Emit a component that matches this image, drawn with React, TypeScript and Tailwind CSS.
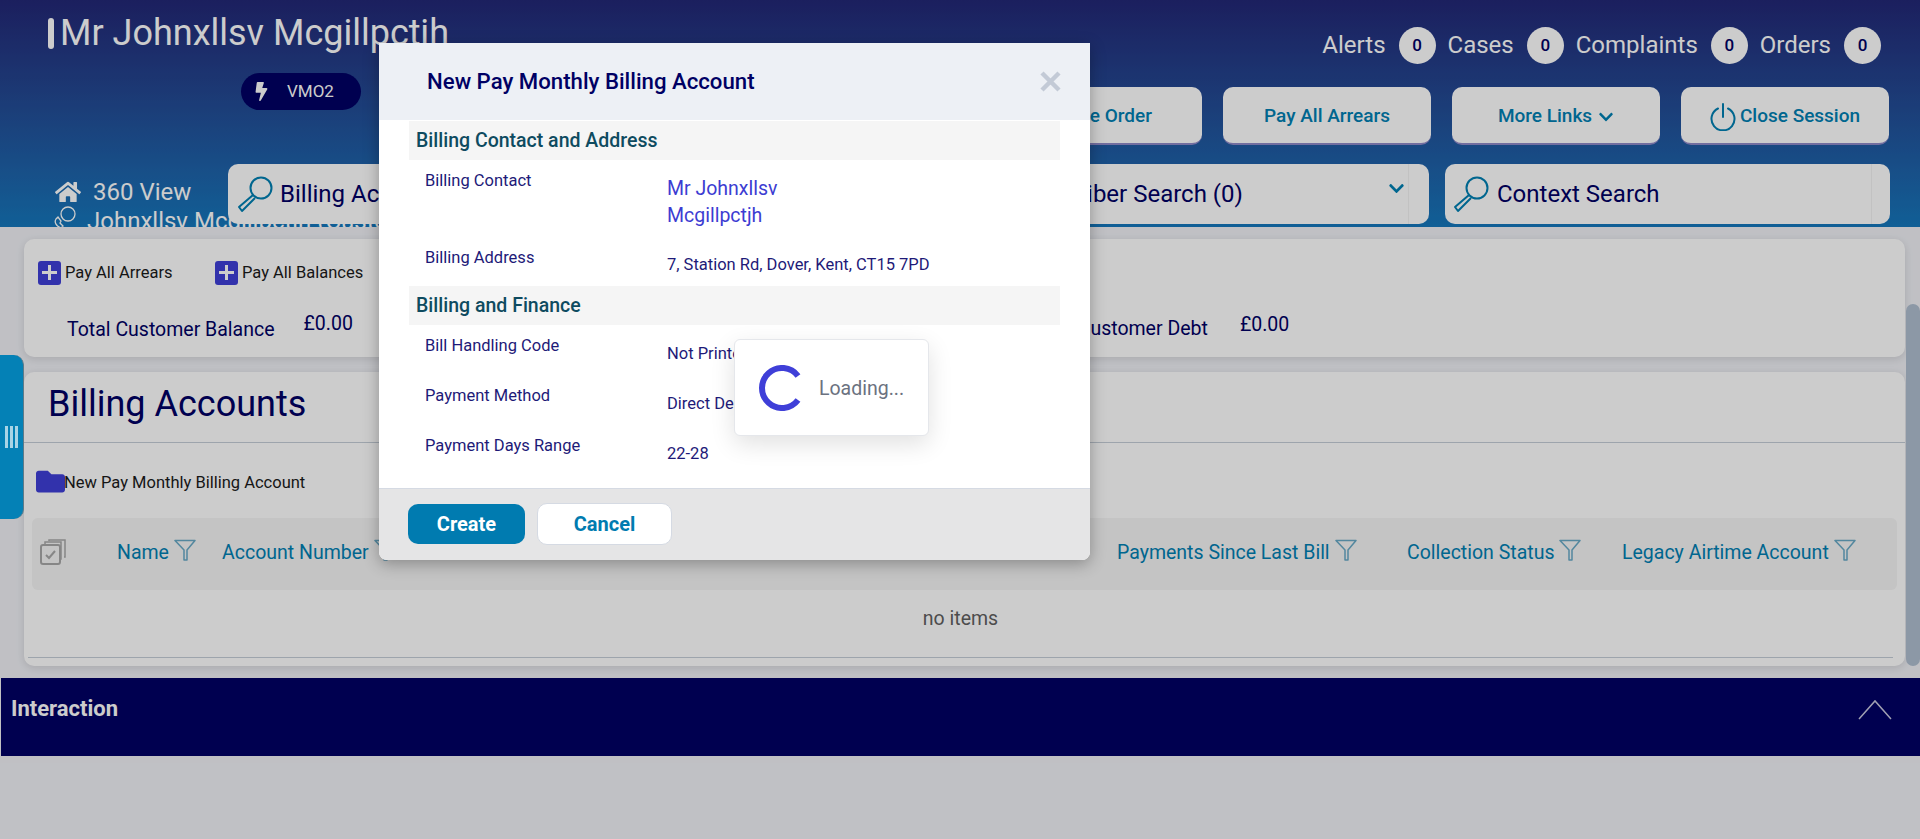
import { FaBolt, FaChevronDown, FaFolder, FaHome } from "react-icons/fa";

const font = "font-['Roboto',sans-serif]";

function Badge({ label }: { label: string }) {
  return (
    <div className="flex items-center gap-[13px]">
      <span className="text-[24px] leading-[30px] text-white -mt-[2px]">{label}</span>
      <span className="w-[37px] h-[37px] rounded-full bg-white text-[#000064] text-[17px] font-medium flex items-center justify-center">
        0
      </span>
    </div>
  );
}

function ActionButton({ children }: { children: React.ReactNode }) {
  return (
    <div className="w-[208px] h-[58px] pt-[3px] rounded-[10px] bg-white border-b-2 border-[#8f8ac9] flex items-center justify-center gap-1 text-[19px] font-medium text-[#0080b3]">
      {children}
    </div>
  );
}

function KeySearch() {
  return (
    <svg width="38" height="38" viewBox="0 0 38 38" fill="none" stroke="#0080b3" strokeWidth="2" className="shrink-0">
      <circle cx="25" cy="13" r="10.5" />
      <path d="M17 20 3 32l3 4 13-13" strokeLinejoin="round" />
    </svg>
  );
}

function PlusBox() {
  return (
    <span className="w-[23px] h-[24px] rounded-[3px] bg-[#3f3fd8] flex items-center justify-center shrink-0">
      <svg width="15" height="15" viewBox="0 0 15 15" stroke="#fff" strokeWidth="3">
        <path d="M7.5 0v15M0 7.5h15" />
      </svg>
    </span>
  );
}

function Funnel() {
  return (
    <svg width="22" height="22" viewBox="0 0 22 22" fill="none" stroke="#68a9c6" strokeWidth="1.5" className="shrink-0 -mt-[6px]">
      <path d="M1 1.5h20l-8 9.5v10h-3V11z" strokeLinejoin="round" />
    </svg>
  );
}

function HeaderCell({ label, className }: { label: string; className: string }) {
  return (
    <div className={`absolute top-0 h-full pb-[2px] flex items-center gap-[5px] text-[19.5px] text-[#0080b3] ${className}`}>
      {label}
      <Funnel />
    </div>
  );
}

function Field({ label, children, className }: { label: string; children: React.ReactNode; className: string }) {
  return (
    <div className={`grid grid-cols-[242px_1fr] pl-[16px] text-[16.5px] text-[#1e1a78] ${className}`}>
      <div className="-mt-[1px]">{label}</div>
      <div className="pt-[7px]">{children}</div>
    </div>
  );
}

export default function App() {
  return (
    <div className={`${font} relative w-[1920px] h-[839px] overflow-hidden bg-[#f0f1f6]`}>
      <header className="relative h-[227px] overflow-hidden bg-gradient-to-b from-[#222776] to-[#1477bc]">
        <div className="flex justify-between h-[164px]">
          <div className="pl-[48px] pt-[13px]">
            <div className="flex items-center gap-[6px]">
              <span className="w-[6px] h-[31px] rounded-[3px] bg-white" />
              <span className="text-[36px] leading-[40px] text-white whitespace-nowrap">Mr Johnxllsv Mcgillpctjh</span>
            </div>
            <div className="ml-[193px] mt-[20px] w-[120px] h-[37px] rounded-full bg-[#000064] flex items-center pl-[11px] gap-[16px] text-[17px] text-white">
              <FaBolt size={19} />
              VMO2
            </div>
          </div>
          <div className="flex flex-col items-end pr-[31px]">
            <div className="flex gap-[12px] pt-[27px] pr-[8px] items-center">
              <Badge label="Alerts" />
              <Badge label="Cases" />
              <Badge label="Complaints" />
              <Badge label="Orders" />
            </div>
            <div className="flex gap-[21px] mt-[23px]">
              <ActionButton>Create Order</ActionButton>
              <ActionButton>Pay All Arrears</ActionButton>
              <ActionButton>
                More Links <FaChevronDown size={16} className="ml-[2px]" />
              </ActionButton>
              <ActionButton>
                <svg width="26" height="28" viewBox="0 0 26 28" fill="none" stroke="#0080b3" strokeWidth="2">
                  <path d="M8 5.5a11.5 11.5 0 1 0 10 0M13 1v13" strokeLinecap="round" />
                </svg>
                Close Session
              </ActionButton>
            </div>
          </div>
        </div>
        <div className="flex h-[60px] pr-[30px]">
          <div className="w-[228px] shrink-0 pl-[55px] text-white text-[24px]">
            <div className="flex items-center gap-[12px] h-[54px] pt-[1px]">
              <FaHome size={26} />
              <span>360 View</span>
            </div>
            <div className="flex items-center gap-[6px] -mt-[15px] -ml-[2px] whitespace-nowrap">
              <svg width="28" height="30" viewBox="0 0 28 30" fill="none" stroke="#fff" strokeWidth="1.3" className="shrink-0 -mt-[3px]">
                <circle cx="15" cy="9" r="7" />
                <path d="M3 14c-2 3 0 7 5 9l2-2-3-3 1-2-3-4zM3 29v-3h22v3" />
              </svg>
              <span>Johnxllsv Mcgillpctjh (Customer)</span>
            </div>
          </div>
          <div className="relative w-[500px] h-[60px] rounded-[10px] bg-white flex items-center pl-[8px] gap-[6px] text-[24px] text-[#000064]">
            <KeySearch />
            Billing Accounts
          </div>
          <div className="relative ml-[20px] w-[681px] h-[60px] rounded-[10px] bg-white flex items-center pl-[265px] text-[24px] text-[#000064]">
            Subscriber Search (0)
            <div className="absolute right-0 top-0 h-full w-[21px] border-l border-[#f3f3f3]" />
            <FaChevronDown size={17} className="absolute right-[24px] top-[16px] text-[#0080b3]" />
          </div>
          <div className="relative ml-[16px] flex-1 h-[60px] rounded-[10px] bg-white flex items-center pl-[7px] gap-[7px] text-[24px] text-[#000064]">
            <KeySearch />
            Context Search
            <div className="absolute right-0 top-0 h-full w-[19px] border-l border-[#f3f3f3]" />
          </div>
        </div>
      </header>

      <div className="flex h-[439px] pl-[24px] pt-[12px]">
        <main className="w-[1881px] shrink-0 flex flex-col gap-[15px]">
          <section className="h-[118px] rounded-[10px] bg-white shadow-[0_2px_8px_rgba(0,0,0,0.12)] px-[14px] pt-[21px]">
            <div className="flex items-center text-[16.5px] text-[#1b1b1b]">
              <PlusBox />
              <span className="ml-[4px] mt-[1px] w-[150px]">Pay All Arrears</span>
              <PlusBox />
              <span className="ml-[4px] mt-[1px]">Pay All Balances</span>
            </div>
            <div className="flex mt-[26px] text-[#000064] text-[19.5px]">
              <span className="ml-[29px] mt-[3px]">Total Customer Balance</span>
              <span className="ml-[29px] -mt-[3px]">£0.00</span>
              <span className="ml-[665px] mt-[2px] w-[190px] text-right whitespace-nowrap">Total Customer Debt</span>
              <span className="ml-[32px] -mt-[2px]">£0.00</span>
            </div>
          </section>
          <section className="h-[294px] rounded-[10px] bg-white shadow-[0_2px_8px_rgba(0,0,0,0.12)] flex flex-col">
            <div className="h-[71px] shrink-0 border-b border-[#c5cdd8] pl-[24px] pt-[9px] text-[36px] leading-[46px] text-[#000064]">
              Billing Accounts
            </div>
            <div className="h-[75px] shrink-0 flex items-center pl-[12px] pt-[6px] text-[16.5px] text-[#1b1b1b]">
              <FaFolder size={29} className="text-[#3f3fd8] shrink-0 -mt-[5px]" />
              <span className="-ml-[1px]">New Pay Monthly Billing Account</span>
            </div>
            <div className="relative mx-[8px] h-[72px] shrink-0 rounded-[6px] bg-[#f5f5f5]">
              <svg width="26" height="26" viewBox="0 0 26 26" fill="none" stroke="#a8a8a8" strokeWidth="1.5" className="absolute left-[8px] top-[21px]">
                <rect x="1" y="6" width="19" height="19" rx="2" strokeWidth="2" />
                <path d="M5 5V3h16v17h-1M9 2V1h16v17h-1" />
                <path d="M6 16l3 3 6-7" strokeWidth="2" />
              </svg>
              <HeaderCell label="Name" className="left-[85px]" />
              <HeaderCell label="Account Number" className="left-[190px]" />
              <HeaderCell label="Payments Since Last Bill" className="left-[1085px]" />
              <HeaderCell label="Collection Status" className="left-[1375px]" />
              <HeaderCell label="Legacy Airtime Account" className="left-[1590px]" />
            </div>
            <div className="h-[68px] shrink-0 pb-[10px] flex items-center justify-center text-[19.5px] text-[#5f5f5f] mx-[8px] border-b border-[#c5cdd8] -translate-x-[4px]">
              no items
            </div>
          </section>
        </main>
        <div className="flex-1 pt-[65px]">
          <div className="h-[362px] ml-[1px] rounded-full bg-[#b0bed0]" />
        </div>
      </div>

      <div className="ml-[1px] mt-[12px] h-[78px] bg-[#000064] flex justify-between pl-[10px] pr-[28px]">
        <span className="pt-[14px] text-[22px] font-bold text-white">Interaction</span>
        <svg width="34" height="22" viewBox="0 0 34 22" fill="none" stroke="#c9c9e0" strokeWidth="1.5" className="mt-[21px]">
          <path d="M1 20 17 2l16 18" />
        </svg>
      </div>

      <div className="absolute inset-0 bg-black/20" />

      <div className="absolute left-0 top-[355px] w-[24px] h-[164px] rounded-r-[10px] bg-[#0481b6] border-r border-[#5d7a88] flex items-center justify-center gap-[2px]">
        <span className="w-[3px] h-[22px] bg-[#a8d4e6]" />
        <span className="w-[3px] h-[22px] bg-[#a8d4e6]" />
        <span className="w-[3px] h-[22px] bg-[#a8d4e6]" />
      </div>

      <div className="absolute left-[379px] top-[43px] w-[711px] h-[517px] rounded-b-[8px] bg-white overflow-hidden shadow-[0_4px_16px_rgba(0,0,0,0.3)] flex flex-col">
        <div className="h-[77px] shrink-0 bg-[#edf0f5] flex items-center justify-between pl-[48px] pr-[29px] text-[22.2px] font-medium text-[#000064]">
          New Pay Monthly Billing Account
          <svg width="21" height="21" viewBox="0 0 21 21" stroke="#c3cad6" strokeWidth="4.5">
            <path d="M2 2l17 17M19 2 2 19" />
          </svg>
        </div>
        <div className="h-[368px] shrink-0 px-[30px] pt-[1px]">
          <div className="h-[39px] bg-[#f5f5f5] pl-[7px] flex items-center text-[19.5px] font-medium text-[#0e4b60]">
            Billing Contact and Address
          </div>
          <Field label="Billing Contact" className="h-[86px] pt-[10px]">
            <div className="-mt-[2px] text-[19.5px] leading-[27px] text-[#3c3cd2]">
              Mr Johnxllsv
              <br />
              Mcgillpctjh
            </div>
          </Field>
          <Field label="Billing Address" className="h-[39px] pt-[1px]">
            <div className="-mt-[1px]">7, Station Rd, Dover, Kent, CT15 7PD</div>
          </Field>
          <div className="h-[39px] mt-[1px] bg-[#f5f5f5] pl-[7px] flex items-center text-[19.5px] font-medium text-[#0e4b60]">
            Billing and Finance
          </div>
          <Field label="Bill Handling Code" className="h-[50px] pt-[10px]">Not Printed</Field>
          <Field label="Payment Method" className="h-[50px] pt-[10px]">Direct Debit</Field>
          <Field label="Payment Days Range" className="h-[50px] pt-[10px]">22-28</Field>
        </div>
        <div className="flex-1 bg-[#e5e5e6] border-t border-[#d5dae3] pl-[29px] pt-[14px] flex gap-[12px] items-start">
          <div className="mt-[1px] w-[117px] h-[40px] rounded-[10px] bg-[#007bb0] flex items-center justify-center text-[20px] font-bold text-white">
            Create
          </div>
          <div className="w-[135px] h-[42px] rounded-[10px] bg-white border border-[#d5dae3] flex items-center justify-center text-[20px] font-bold text-[#007bb0]">
            Cancel
          </div>
        </div>
      </div>

      <div className="absolute left-[734px] top-[339px] w-[195px] h-[97px] pt-[1px] rounded-[6px] bg-white border border-[#e5e7eb] shadow-[0_8px_24px_rgba(0,0,0,0.12)] flex items-center pl-[22px] gap-[16px]">
        <svg width="46" height="46" viewBox="0 0 46 46" fill="none" stroke="#3f3fd8" strokeWidth="6">
          <path d="M41 11A20 20 0 1 0 41 35" />
        </svg>
        <span className="mt-[2px] text-[19.5px] text-[#6b7280]">Loading...</span>
      </div>
    </div>
  );
}
